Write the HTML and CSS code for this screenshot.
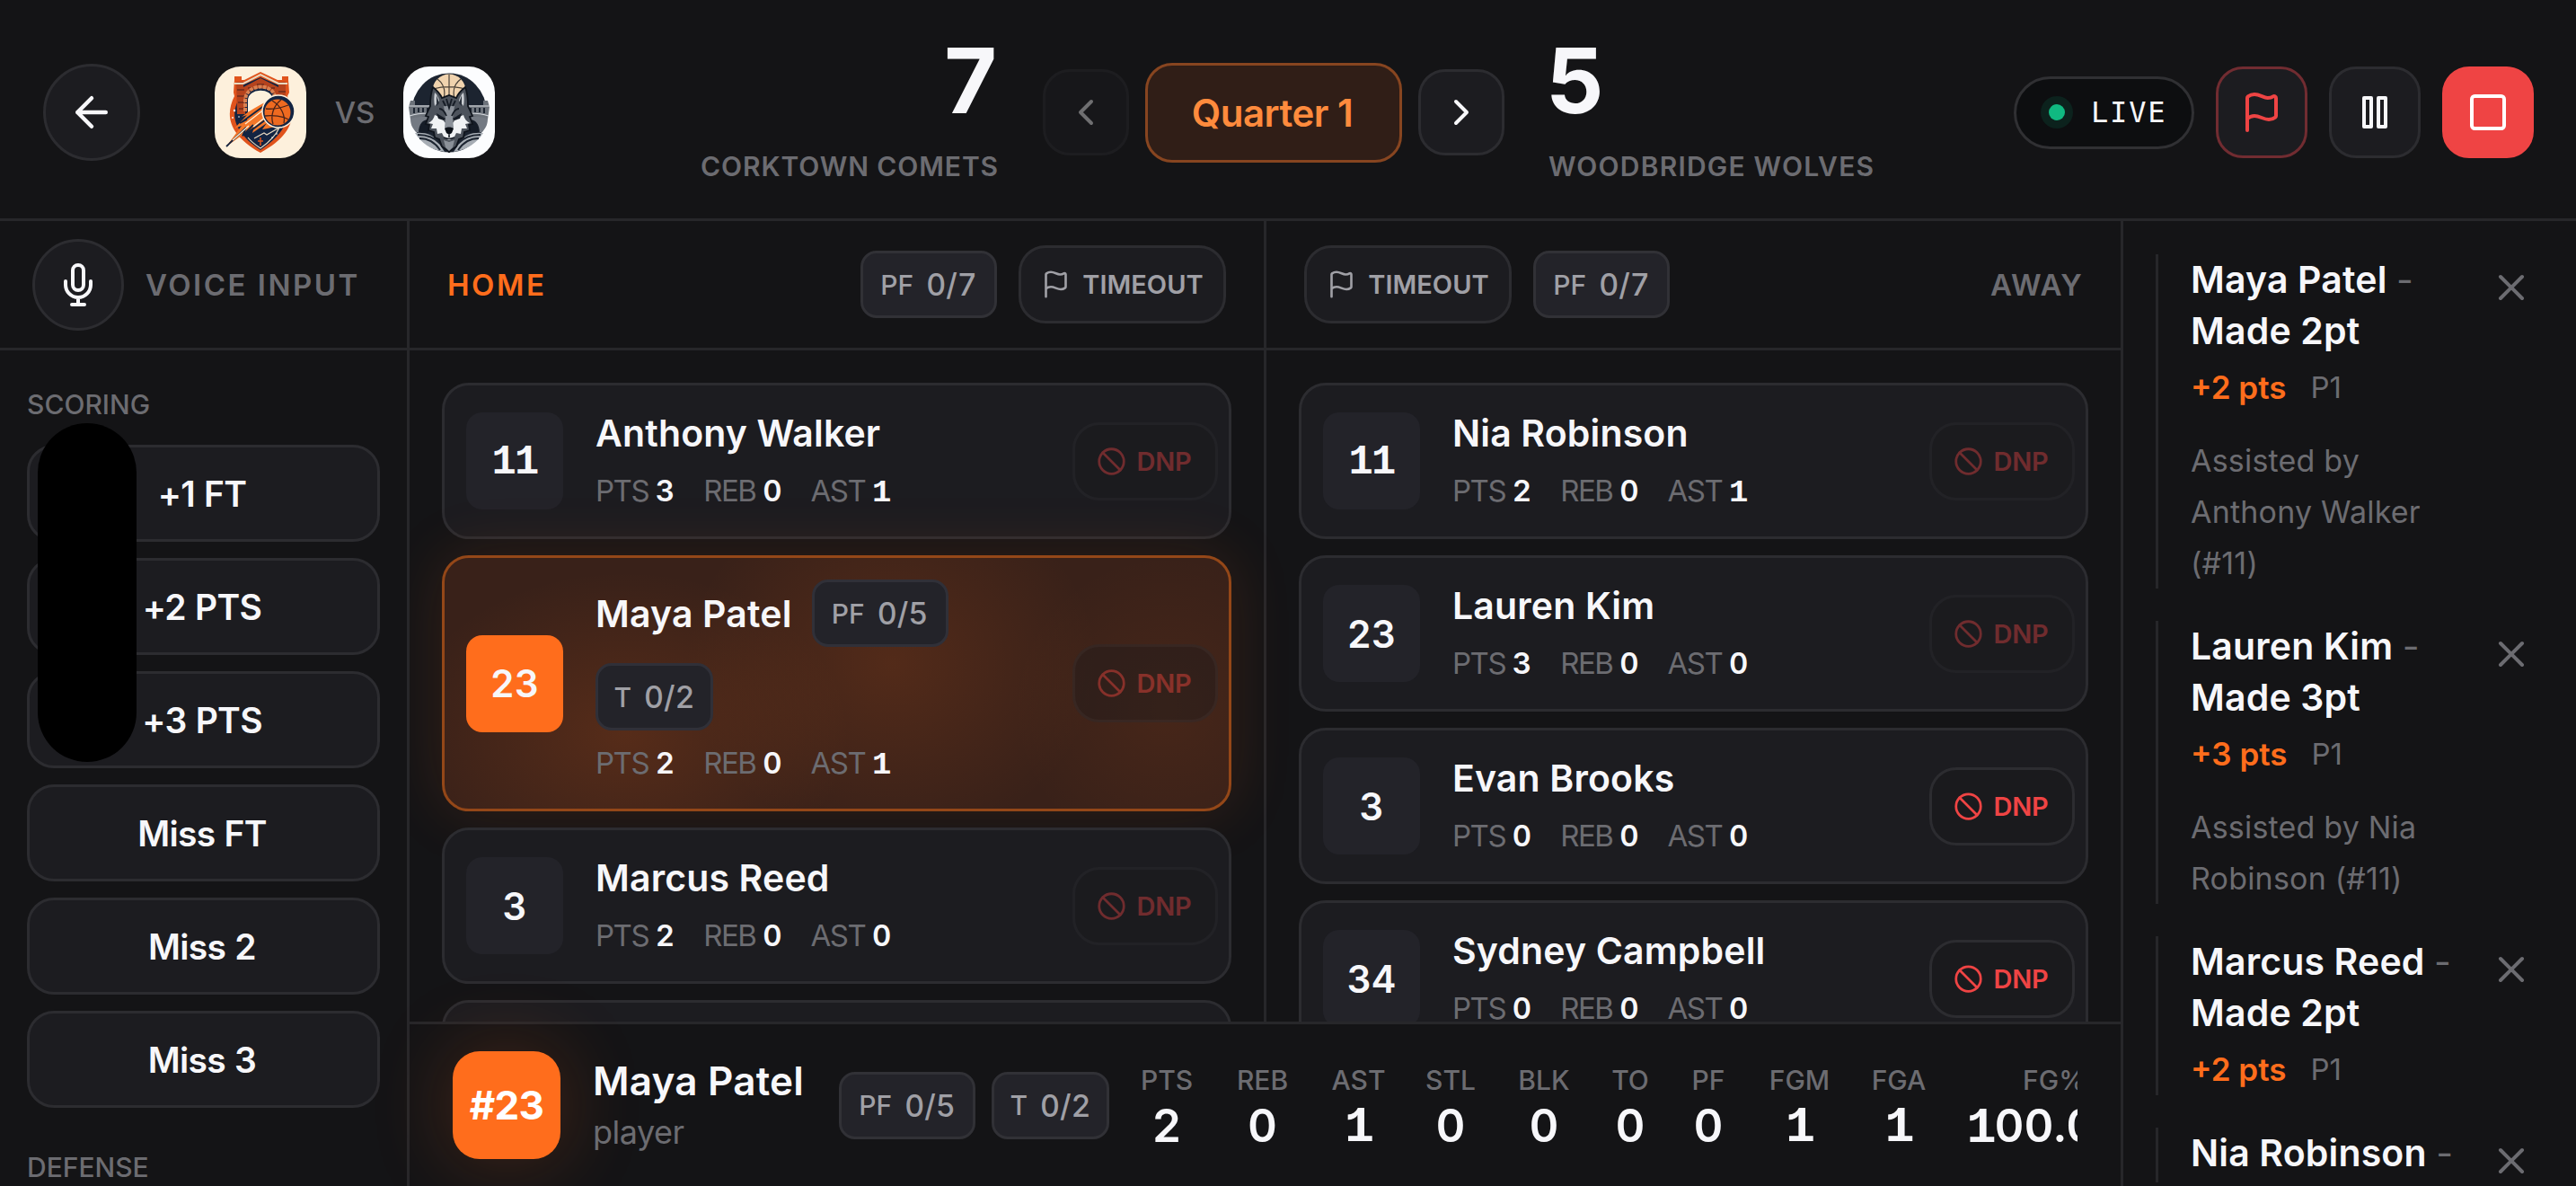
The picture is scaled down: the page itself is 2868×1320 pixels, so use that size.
FILE: index.html
```html
<!DOCTYPE html>
<html lang="en">
<head>
<meta charset="utf-8">
<title>Corktown Comets vs Woodbridge Wolves</title>
<link rel="stylesheet" href="styles.css">
</head>
<body>
<svg class="sprite" aria-hidden="true">
  <symbol id="i-back" viewBox="0 0 24 24"><path d="m12 19-7-7 7-7M19 12H5"/></symbol>
  <symbol id="i-left" viewBox="0 0 24 24"><path d="m15 18-6-6 6-6"/></symbol>
  <symbol id="i-right" viewBox="0 0 24 24"><path d="m9 18 6-6-6-6"/></symbol>
  <symbol id="i-flag" viewBox="0 0 24 24"><path d="M4 22V4a1 1 0 0 1 .4-.8A6 6 0 0 1 8 2c3 0 5 2 7.333 2q2 0 3.067-.8A1 1 0 0 1 20 4v10a1 1 0 0 1-.4.8A6 6 0 0 1 16 16c-3 0-5-2-8-2a6 6 0 0 0-4 1.528"/></symbol>
  <symbol id="i-pause" viewBox="0 0 24 24"><rect x="6" y="4" width="4" height="16"/><rect x="14" y="4" width="4" height="16"/></symbol>
  <symbol id="i-stop" viewBox="0 0 24 24"><rect x="3" y="3" width="18" height="18" rx="1.6"/></symbol>
  <symbol id="i-mic" viewBox="0 0 24 24"><path d="M12 1a3 3 0 0 0-3 3v8a3 3 0 0 0 6 0V4a3 3 0 0 0-3-3zM19 10v2a7 7 0 0 1-14 0v-2M12 19v4M8.500 23h7"/></symbol>
  <symbol id="i-ban" viewBox="0 0 24 24"><circle cx="12" cy="12" r="10"/><path d="m4.900 4.900 14.200 14.200"/></symbol>
  <symbol id="i-x" viewBox="0 0 24 24"><path d="M18 6 6 18M6 6l12 12"/></symbol>
</svg>

<header class="topbar">
  <div class="match">
    <button class="back"><svg class="icon i54"><use href="#i-back"/></svg></button>
    <svg class="logo" viewBox="0 0 102 102">
      <rect width="102" height="102" fill="#fdf0dc"/>
      <path d="M51 6 70 15h5v-4h7v4l1 14-2 4c10 20 8 42-30 63C14 75 12 53 22 33l-1-4 1-14v-4h8v4h3z" fill="#e0531c"/>
      <path d="M51 12 74 22v12c12 20 8 38-23 59C20 72 17 53 28 34V22z" fill="#132442"/>
      <path d="M24 17h8v6l19-10 20 10v-6h8v16H68c-6-12-29-12-34 0v20H25z" fill="#b5431d"/>
      <path d="M25 26h8M25 33h8M26 40h7M27 47h6M37 24h6m4-4h8m4 4h8m4 4h8" stroke="#6b2b1c" stroke-width="1.300"/>
      <path d="M22 19h10l19-10 20 10h10" fill="none" stroke="#e8d9c0" stroke-width="2"/>
      <path d="M36 51V38c0-16 29-16 29-2L40 56z" fill="#fdf0dc" stroke="#132442" stroke-width="2"/>
      <path d="M34 50V38c0-20 33-20 33-3" fill="none" stroke="#d98152" stroke-width="4" stroke-dasharray="4 1"/>
      <path d="M13 89 30 66l-8 3 14-15-6 2c10-8 20-13 30-18l17 24c-9 5-16 7-24 8l5-7-16 11 2-7z" fill="#f4772a"/>
      <path d="m13 89 22-21-4 9 12-12m-13-3 26-19M41 71l16-12m-29 4 8-4" fill="none" stroke="#132442" stroke-width="1.800"/>
      <path d="m34 64 22-17M43 67l14-11M20 82l18-16" fill="none" stroke="#fff0d4" stroke-width="1.300"/>
      <circle cx="71" cy="50" r="18" fill="#132442" stroke="#fdf0dc" stroke-width="1.500"/>
      <circle cx="70" cy="51" r="14.500" fill="#ee6a20"/>
      <path d="M57 47c10 1 20-2 25-4M64 38c10 6 15 17 13 25M74 37c-9 7-12 18-9 27M56 55c8-1 20 0 26 4" fill="none" stroke="#4a2318" stroke-width="1.300"/>
      <path d="M51 79v9m-3-5h6" stroke="#e0531c" stroke-width="1.500"/>
      <path d="m44 80 11-6 3 2 14-8c-4 9-11 16-21 23-6-4-11-8-14-12" fill="none" stroke="#e8d9c0" stroke-width="1.200"/>
      <g fill="#fff"><circle cx="22" cy="49" r="1.200"/><circle cx="20" cy="57" r=".9"/><circle cx="27" cy="56" r=".8"/><circle cx="64" cy="79" r=".8"/><circle cx="69" cy="75" r=".8"/></g>
    </svg>
    <span class="vs">VS</span>
    <svg class="logo" viewBox="0 0 102 102">
      <rect width="102" height="102" fill="#fcfdfe"/>
      <ellipse cx="51" cy="51.500" rx="42" ry="44" fill="#1c2430"/>
      <circle cx="51" cy="27" r="18.500" fill="#f0d3ae"/>
      <path d="M51 9v30M33 25c11-3 25-3 36 0M38 14c8 6 9 14 7 22M64 14c-8 6-9 14-7 22" fill="none" stroke="#4b4238" stroke-width="1.200"/>
      <path d="M8 38h5v5h17v12c-8 0-14 2-22 4l-2-14zM94 38h-5v5H72v12c8 0 14 2 22 4l2-14z" fill="#6d737b"/>
      <path d="M6 44h23M7 55c8-3 14-3 22-3M96 44H73M95 55c-8-3-14-3-22-3" fill="none" stroke="#d5d9de" stroke-width="1.200"/>
      <path d="M12 46v6m5-6v5m5-5v5m5-5v5M90 46v6m-5-6v5m-5-5v5m-5-5v5" stroke="#1c2430" stroke-width="2"/>
      <path d="M8 58c8-2 14-3 20-3v18H14C9 67 8 63 8 58zM94 58c-8-2-14-3-20-3v18h14c5-6 6-10 6-15z" fill="#747a83"/>
      <path d="M17 74c0-10 5-15 11-15v15zM85 74c0-10-5-15-11-15v15z" fill="#151c27"/>
      <path d="M13 74c12-1 20 2 25 9l8 12C31 93 20 85 13 74zM89 74c-12-1-20 2-25 9l-8 12c15-2 26-10 33-21z" fill="#a7adb4"/>
      <path d="M18 80c9 0 17 4 23 13M16 76c11 0 19 3 25 10M84 80c-9 0-17 4-23 13M86 76c-11 0-19 3-25 10" fill="none" stroke="#1c2430" stroke-width="1.800"/>
      <path d="M33 23c5 4 8 7 10 12l8-3 8 3c2-5 5-8 10-12 3 8 3 14 3 21l5 11-3 1 3 8-4 1 1 6-6 2-1 6-5 2-3 8-8 6-8-6-3-8-5-2-1-6-6-2 1-6-4-1 3-8-3-1 5-11c0-7 0-13 3-21z" fill="#4d535c" stroke="#0f141c" stroke-width="1.800"/>
      <path d="M35 29c3 3 4 5 5 9l-5 6c-1-5-1-10 0-15zM67 29c-3 3-4 5-5 9l5 6c1-5 1-10 0-15z" fill="#c9cdd2"/>
      <path d="M37 32l3 9-3 3zM65 32l-3 9 3 3z" fill="#2a313b"/>
      <path d="M28 63c4-2 6-5 7-9 5 2 9 4 11 8l5 3 5-3c2-4 6-6 11-8 1 4 3 7 7 9l-5 1 2 5-6 0-1 6-5-1-3 6-5 2-5-2-3-6-5 1-1-6h-6l2-5z" fill="#f0f2f4"/>
      <path d="M45 44h12l-2 14 1 10-5 3-5-3 1-10z" fill="#8b9199"/>
      <path d="M40 47c3 0 6 3 8 8M62 47c-3 0-6 3-8 8M48 36l3 10 3-10M44 38l3 6M58 38l-3 6" fill="none" stroke="#161c25" stroke-width="1.800"/>
      <path d="m37 52 10 6-2 2-6-2zM65 52l-10 6 2 2 6-2z" fill="#161c25"/>
      <path d="M46 69c2-2 8-2 10 0l-2 5-3 2-3-2z" fill="#0c1118"/>
      <path d="M51 76v3m-6 0c4 2 8 2 12 0" fill="none" stroke="#161c25" stroke-width="1.600"/>
      <path d="m45 82 6 2 6-2-2 8-4 4-4-4z" fill="#8b9199"/>
    </svg>
  </div>
  <div class="team home"><div class="score">7</div><div class="team-name">CORKTOWN COMETS</div></div>
  <div class="period">
    <button class="sq step off"><svg class="icon i48"><use href="#i-left"/></svg></button>
    <button class="quarter">Quarter 1</button>
    <button class="sq step"><svg class="icon i48"><use href="#i-right"/></svg></button>
  </div>
  <div class="team away"><div class="score">5</div><div class="team-name">WOODBRIDGE WOLVES</div></div>
  <div class="actions">
    <div class="live"><i class="dot"></i>LIVE</div>
    <button class="sq act flagged"><svg class="icon i48"><use href="#i-flag"/></svg></button>
    <button class="sq act"><svg class="icon i48"><use href="#i-pause"/></svg></button>
    <button class="sq act stop"><svg class="icon i48"><use href="#i-stop"/></svg></button>
  </div>
</header>

<main class="board">
  <aside class="inputs">
    <div class="subhead voice">
      <button class="mic"><svg class="icon i48"><use href="#i-mic"/></svg></button>
      <span class="label voice-label">VOICE INPUT</span>
    </div>
    <div class="plays">
      <h2 class="group">SCORING</h2>
      <button class="play">+1 FT</button>
      <button class="play">+2 PTS</button>
      <button class="play">+3 PTS</button>
      <button class="play">Miss FT</button>
      <button class="play">Miss 2</button>
      <button class="play">Miss 3</button>
      <h2 class="group second">DEFENSE</h2>
    </div>
  </aside>

  <section class="center">
    <div class="rosters">
      <div class="roster">
        <div class="subhead team-head">
          <span class="label home-label">HOME</span>
          <div class="tools">
            <span class="chip"><small>PF</small>0/7</span>
            <button class="timeout"><svg class="icon i33"><use href="#i-flag"/></svg>TIMEOUT</button>
          </div>
        </div>
        <div class="players">
          <div class="card">
            <div class="num"><span class="one">11</span></div>
            <div class="info"><div class="who"><span class="name">Anthony Walker</span></div>
              <div class="line"><span>PTS <b>3</b></span><span>REB <b>0</b></span><span>AST <b class="one">1</b></span></div></div>
            <button class="dnp off"><svg class="icon i33"><use href="#i-ban"/></svg>DNP</button>
          </div>
          <div class="card active">
            <div class="num">23</div>
            <div class="info"><div class="who tall"><span class="name">Maya Patel</span><span class="chip"><small>PF</small>0/5</span><span class="chip t"><small>T</small>0/2</span></div>
              <div class="line"><span>PTS <b>2</b></span><span>REB <b>0</b></span><span>AST <b class="one">1</b></span></div></div>
            <button class="dnp off"><svg class="icon i33"><use href="#i-ban"/></svg>DNP</button>
          </div>
          <div class="card">
            <div class="num">3</div>
            <div class="info"><div class="who"><span class="name">Marcus Reed</span></div>
              <div class="line"><span>PTS <b>2</b></span><span>REB <b>0</b></span><span>AST <b>0</b></span></div></div>
            <button class="dnp off"><svg class="icon i33"><use href="#i-ban"/></svg>DNP</button>
          </div>
          <div class="card"></div>
        </div>
      </div>

      <div class="roster">
        <div class="subhead team-head">
          <div class="tools">
            <button class="timeout"><svg class="icon i33"><use href="#i-flag"/></svg>TIMEOUT</button>
            <span class="chip"><small>PF</small>0/7</span>
          </div>
          <span class="label away-label">AWAY</span>
        </div>
        <div class="players">
          <div class="card">
            <div class="num"><span class="one">11</span></div>
            <div class="info"><div class="who"><span class="name">Nia Robinson</span></div>
              <div class="line"><span>PTS <b>2</b></span><span>REB <b>0</b></span><span>AST <b class="one">1</b></span></div></div>
            <button class="dnp off"><svg class="icon i33"><use href="#i-ban"/></svg>DNP</button>
          </div>
          <div class="card">
            <div class="num">23</div>
            <div class="info"><div class="who"><span class="name">Lauren Kim</span></div>
              <div class="line"><span>PTS <b>3</b></span><span>REB <b>0</b></span><span>AST <b>0</b></span></div></div>
            <button class="dnp off"><svg class="icon i33"><use href="#i-ban"/></svg>DNP</button>
          </div>
          <div class="card">
            <div class="num">3</div>
            <div class="info"><div class="who"><span class="name">Evan Brooks</span></div>
              <div class="line"><span>PTS <b>0</b></span><span>REB <b>0</b></span><span>AST <b>0</b></span></div></div>
            <button class="dnp"><svg class="icon i33"><use href="#i-ban"/></svg>DNP</button>
          </div>
          <div class="card">
            <div class="num">34</div>
            <div class="info"><div class="who"><span class="name">Sydney Campbell</span></div>
              <div class="line"><span>PTS <b>0</b></span><span>REB <b>0</b></span><span>AST <b>0</b></span></div></div>
            <button class="dnp"><svg class="icon i33"><use href="#i-ban"/></svg>DNP</button>
          </div>
        </div>
      </div>
    </div>

    <div class="selected">
      <div class="badge">#23</div>
      <div class="ident"><div class="sel-name">Maya Patel</div><div class="role">player</div></div>
      <span class="chip"><small>PF</small>0/5</span>
      <span class="chip t"><small>T</small>0/2</span>
      <div class="totals">
        <div class="total w-pts"><span>PTS</span><b>2</b></div>
        <div class="total w-reb"><span>REB</span><b>0</b></div>
        <div class="total w-ast"><span>AST</span><b class="one">1</b></div>
        <div class="total w-stl"><span>STL</span><b>0</b></div>
        <div class="total w-blk"><span>BLK</span><b>0</b></div>
        <div class="total w-to"><span>TO</span><b>0</b></div>
        <div class="total w-pf"><span>PF</span><b>0</b></div>
        <div class="total w-fgm"><span>FGM</span><b class="one">1</b></div>
        <div class="total w-fga"><span>FGA</span><b class="one">1</b></div>
        <div class="total w-pct"><span>FG%</span><b><i class="one">1</i>00.0%</b></div>
      </div>
    </div>
  </section>

  <aside class="log">
    <article class="event">
      <div class="what">
        <h3>Maya Patel <em>-</em><br>Made 2pt</h3>
        <p class="pts"><strong>+2 pts</strong><span>P1</span></p>
        <p class="assist">Assisted by<br>Anthony Walker<br>(#11)</p>
      </div>
      <svg class="icon i48 close"><use href="#i-x"/></svg>
    </article>
    <article class="event">
      <div class="what">
        <h3>Lauren Kim <em>-</em><br>Made 3pt</h3>
        <p class="pts"><strong>+3 pts</strong><span>P1</span></p>
        <p class="assist">Assisted by Nia<br>Robinson (#11)</p>
      </div>
      <svg class="icon i48 close"><use href="#i-x"/></svg>
    </article>
    <article class="event">
      <div class="what">
        <h3>Marcus Reed <em>-</em><br>Made 2pt</h3>
        <p class="pts"><strong>+2 pts</strong><span>P1</span></p>
      </div>
      <svg class="icon i48 close"><use href="#i-x"/></svg>
    </article>
    <article class="event">
      <div class="what">
        <h3>Nia Robinson <em>-</em></h3>
      </div>
      <svg class="icon i48 close"><use href="#i-x"/></svg>
    </article>
  </aside>
</main>
<div class="island"></div>
</body>
</html>
```
FILE: styles.css
```css
:root {
  --bg: #141416;
  --card: #1c1c20;
  --chip: #232329;
  --edge: #2c2c30;
  --rule: #27272a;
  --text: #f7f7fa;
  --muted: #6c6c71;
  --soft: #a0a0a6;
  --orange: #ff6d1c;
  --red: #ef4444;
}
* { box-sizing: border-box; margin: 0; padding: 0; }
body {
  width: 2868px; height: 1320px; overflow: hidden;
  display: flex; flex-direction: column;
  background: var(--bg); color: var(--text);
  font-family: Inter, "Liberation Sans", sans-serif;
}
button { font: inherit; color: inherit; background: none; border: 0; white-space: nowrap; }
.sprite { display: none; }
.icon { fill: none; stroke: currentColor; stroke-width: 2; stroke-linecap: round; stroke-linejoin: round; flex: none; display: block; overflow: visible; }
.i33 { width: 33px; height: 33px; }
.i48 { width: 48px; height: 48px; }
.i54 { width: 54px; height: 54px; }
.one { font-family: "Liberation Mono", monospace; font-size: 1.08em; font-style: normal; font-weight: 700; letter-spacing: -.04em; line-height: 1; }

/* top bar */
.topbar { flex: none; height: 246px; border-bottom: 3px solid var(--rule); padding: 7px 47px 0 48px; display: flex; align-items: center; }
.match { width: 682px; flex: none; display: flex; align-items: center; }
.back, .mic { border: 3px solid var(--edge); border-radius: 50%; background: var(--card); display: grid; place-items: center; flex: none; }
.back { width: 108px; height: 108px; margin-right: 83px; }
.logo { width: 102px; height: 102px; border-radius: 29px; }
.vs { width: 108px; text-align: center; font-size: 33px; font-weight: 550; color: var(--muted); letter-spacing: 0; }
.team { flex: none; }
.home { width: 380px; text-align: right; }
.away { width: 380px; }
.score { font-size: 101px; line-height: 108px; font-weight: 700; margin-top: -10px; }
.away .score { margin-left: -3px; }
.team-name { font-size: 30px; line-height: 42px; font-weight: 600; letter-spacing: 1.200px; color: var(--muted); margin-top: 21px; white-space: nowrap; }
.home .team-name { margin-right: -2px; letter-spacing: .9px; }
.period { display: flex; align-items: center; gap: 18px; margin: 0 49px 0 51px; }
.sq { border: 3px solid var(--edge); border-radius: 30px; background: var(--card); display: grid; place-items: center; flex: none; }
.step { width: 96px; height: 96px; }
.step.off { opacity: .4; }
.quarter { width: 286px; height: 111px; border-radius: 30px; border: 3px solid #874520; background: #301e17; color: #ff8b3d; font-size: 42px; font-weight: 600; letter-spacing: -.5px; padding-right: 3px; }
.actions { margin-left: auto; display: flex; align-items: center; gap: 24px; }
.act { width: 102px; height: 102px; }
.flagged { border-color: #712c31; color: var(--red); }
.stop { background: var(--red); border-color: var(--red); color: #fff; }
.live { width: 201px; height: 81px; border: 3px solid #303033; border-radius: 41px; background: #0d0e10; display: flex; align-items: center; padding-left: 36px; font: 500 32px "DejaVu Sans Mono", "Liberation Mono", monospace; letter-spacing: 1.800px; }
.dot { width: 18px; height: 18px; border-radius: 50%; background: #10b981; box-shadow: 0 0 0 9px #0c221d; margin-right: 29px; }

/* board */
.board { flex: 1; min-height: 0; display: grid; grid-template-columns: 456px 1908px 504px; }
.subhead { height: 144px; flex: none; border-bottom: 3px solid var(--rule); display: flex; align-items: center; }
.label { font-size: 33px; font-weight: 600; color: var(--muted); letter-spacing: 2.500px; }
.away-label { letter-spacing: 1.200px; }
.inputs { border-right: 3px solid var(--rule); overflow: hidden; }
.voice { padding-left: 36px; gap: 24px; }
.mic { width: 102px; height: 102px; }
.plays { padding: 39px 30px 0; display: flex; flex-direction: column; gap: 18px; }
.group { font-size: 30px; line-height: 42px; font-weight: 550; color: var(--muted); margin-bottom: 6px; }
.second { margin-top: 27px; }
.play { height: 108px; flex: none; border: 3px solid var(--edge); border-radius: 30px; background: var(--card); font-size: 39px; font-weight: 600; letter-spacing: -.7px; word-spacing: 1px; padding-right: 3px; }

.center { display: flex; flex-direction: column; min-height: 0; border-right: 3px solid var(--rule); }
.rosters { height: 891px; flex: none; display: grid; grid-template-columns: 954px 951px; overflow: hidden; }
.roster { min-width: 0; display: flex; flex-direction: column; height: 891px; }
.roster:first-child { border-right: 3px solid var(--rule); }
.team-head { padding: 0 42px; justify-content: space-between; }
.home-label { color: var(--orange); }
.tools { display: flex; align-items: center; gap: 24px; }
.chip { width: 152px; height: 75px; flex: none; border: 3px solid #313136; border-radius: 18px; background: var(--chip); color: var(--soft); display: flex; align-items: center; justify-content: center; gap: 14px; font-size: 34px; font-weight: 550; font-feature-settings: "tnum"; }
.chip small { font-size: 30px; font-weight: 550; }
.chip.t { width: 131px; }
.timeout { width: 231px; height: 87px; border: 3px solid var(--edge); border-radius: 30px; background: var(--card); color: var(--soft); display: flex; align-items: center; justify-content: center; gap: 13px; font-size: 29px; font-weight: 600; }
.timeout .icon { stroke-width: 1.900; }

.players { flex: 1; min-height: 0; padding: 36px 36px 0; display: flex; flex-direction: column; gap: 18px; }
.card { flex: none; height: 174px; border: 3px solid var(--edge); border-radius: 30px; background: var(--card); padding: 24px 12px 24px 24px; display: flex; align-items: center; }
.num { width: 108px; height: 108px; flex: none; border-radius: 18px; background: var(--chip); display: grid; place-items: center; font-size: 42px; font-weight: 600; font-feature-settings: "tnum"; }
.num .one { padding-top: 5px; }
.info { flex: 1; padding-left: 36px; }
.who { height: 57px; display: flex; flex-wrap: wrap; align-items: center; column-gap: 22px; row-gap: 18px; margin-bottom: 12px; }
.who.tall { height: 168px; width: 430px; }
.name { font-size: 41px; font-weight: 600; white-space: nowrap; letter-spacing: .15px; }
.line { height: 51px; line-height: 49px; display: flex; gap: 32px; font-size: 33px; letter-spacing: -1.500px; color: var(--muted); white-space: nowrap; }
.line b { color: var(--text); font-weight: 600; letter-spacing: 0; font-feature-settings: "tnum"; }
.dnp { width: 162px; height: 87px; flex: none; border: 3px solid var(--edge); border-radius: 30px; color: var(--red); display: flex; align-items: center; justify-content: center; gap: 12px; padding-right: 3px; font-size: 29px; font-weight: 600; letter-spacing: -.3px; background: #1a1a1d; }
.dnp.off { opacity: .4; }
.active {
  height: 285px; border-color: #944718;
  background:
    radial-gradient(ellipse 250px 180px at 23% 70%, rgba(255,107,26,.15), transparent),
    radial-gradient(ellipse 230px 200px at 57% 42%, rgba(255,107,26,.13), transparent),
    radial-gradient(ellipse 170px 170px at 92% 60%, rgba(255,107,26,.07), transparent),
    #392119;
  box-shadow: 0 0 70px rgba(255,107,26,.14);
}
.active .num { background: var(--orange); }
.active .chip { border-color: #303038; }

.selected { flex: 1; border-top: 3px solid var(--rule); padding: 0 48px; display: flex; align-items: center; position: relative; }
.badge { width: 120px; height: 120px; flex: none; border-radius: 30px; background: var(--orange); color: #fff; display: grid; place-items: center; font-size: 44px; font-weight: 700; letter-spacing: -.8px; box-shadow: 0 0 90px rgba(255,107,26,.22); }
.ident { width: 310px; flex: none; padding-left: 36px; }
.sel-name { font-size: 44px; line-height: 60px; font-weight: 600; letter-spacing: .2px; }
.role { font-size: 36px; line-height: 54px; color: var(--muted); letter-spacing: -.5px; }
.selected .chip + .chip { margin-left: 18px; }
.totals { flex: 1; min-width: 0; margin-left: 36px; overflow: hidden; display: flex; gap: 48px; padding-top: 8px; }
.total { flex: none; display: flex; flex-direction: column; align-items: center; white-space: nowrap; }
.total span { font-size: 30px; line-height: 42px; font-weight: 550; color: var(--muted); }
.total b { font-size: 51px; line-height: 60px; font-weight: 600; font-feature-settings: "tnum"; }
.total b.one { font-size: 55px; font-weight: 700; line-height: 65px; }
.w-pts { width: 56px; } .w-reb { width: 61px; } .w-ast { width: 57px; } .w-stl { width: 52px; } .w-blk { width: 60px; }
.w-to { width: 36px; } .w-pf { width: 42px; } .w-fgm { width: 65px; } .w-fga { width: 60px; } .w-pct { width: 190px; }

/* play log */
.log { padding: 37px 48px 0 36px; display: flex; flex-direction: column; gap: 36px; overflow: hidden; }
.event { flex: none; border-left: 3px solid var(--rule); padding-left: 36px; display: flex; justify-content: space-between; }
.what { white-space: nowrap; }
.event h3 { font-size: 41px; line-height: 57px; font-weight: 600; letter-spacing: .15px; }
.event em { font-style: normal; font-weight: 400; color: var(--muted); }
.pts { margin-top: 6px; height: 57px; line-height: 57px; font-size: 33px; display: flex; gap: 27px; color: var(--muted); }
.pts strong { color: var(--orange); font-weight: 600; font-size: 35px; }
.assist { margin-top: 24px; font-size: 34px; line-height: 57px; letter-spacing: .2px; color: var(--muted); }
.close { margin-top: 13px; color: var(--muted); }

/* camera cut-out of the device, drawn above the interface */
.island { position: absolute; left: 42px; top: 471px; width: 110px; height: 377px; border-radius: 55px; background: #000; }
```
